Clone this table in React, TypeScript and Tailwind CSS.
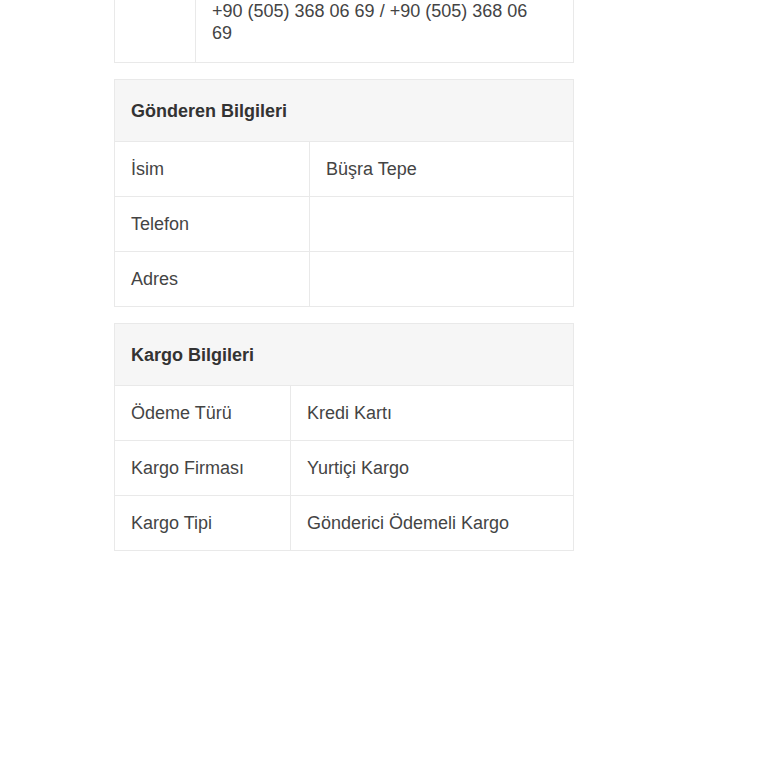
const font = { fontFamily: '"Liberation Sans", Arial, sans-serif' };

interface Row {
  label: string;
  value: string;
}

function InfoTable({ title, rows, labelWidth }: { title: string; rows: Row[]; labelWidth: string }) {
  return (
    <table className="w-full border-collapse border border-[#e9e9e9] text-[18px] leading-[22px]">
      <thead>
        <tr>
          <th colSpan={2} className="bg-[#f6f6f6] px-4 pt-5 pb-[19px] text-left font-bold text-[#333]">
            {title}
          </th>
        </tr>
      </thead>
      <tbody>
        {rows.map((r) => (
          <tr key={r.label} className="border-t border-[#e9e9e9]">
            <td className={`${labelWidth} border-r border-[#e9e9e9] px-4 py-4 text-[#444]`}>{r.label}</td>
            <td className="px-4 py-4 text-[#444]">{r.value || "\u00a0"}</td>
          </tr>
        ))}
      </tbody>
    </table>
  );
}

export default function App() {
  return (
    <div className="min-h-[768px] w-[768px] overflow-hidden bg-white" style={font}>
      <div className="ml-[114px] w-[460px]">
        <table className="-mt-[17px] w-full border-collapse border border-[#e9e9e9] text-[18px] leading-[22px]">
          <tbody>
            <tr>
              <td className="w-[81px] border-r border-[#e9e9e9]"></td>
              <td className="px-4 pt-4 pb-[18px] text-[#444]">
                +90 (505) 368 06 69 / +90 (505) 368 06
                <br />
                69
              </td>
            </tr>
          </tbody>
        </table>

        <div className="mt-4">
          <InfoTable
            title="Gönderen Bilgileri"
            labelWidth="w-[195px]"
            rows={[
              { label: "İsim", value: "Büşra Tepe" },
              { label: "Telefon", value: "" },
              { label: "Adres", value: "" },
            ]}
          />
        </div>

        <div className="mt-4">
          <InfoTable
            title="Kargo Bilgileri"
            labelWidth="w-[176px]"
            rows={[
              { label: "Ödeme Türü", value: "Kredi Kartı" },
              { label: "Kargo Firması", value: "Yurtiçi Kargo" },
              { label: "Kargo Tipi", value: "Gönderici Ödemeli Kargo" },
            ]}
          />
        </div>
      </div>
    </div>
  );
}
